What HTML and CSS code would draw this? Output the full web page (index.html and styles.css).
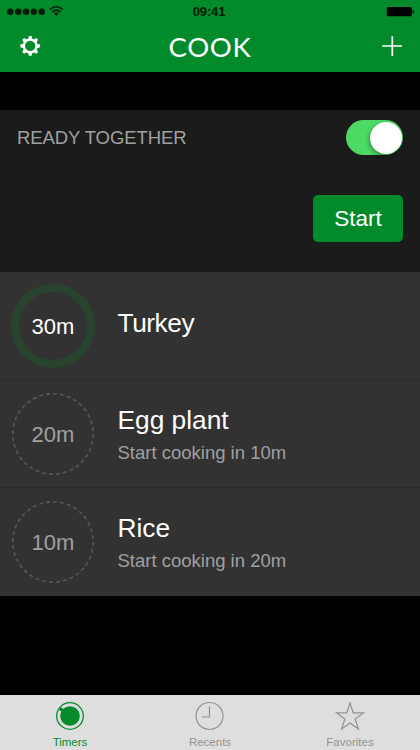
FILE: index.html
```html
<!DOCTYPE html>
<html lang="en">
<head>
<meta charset="utf-8">
<title>Cook</title>
<link rel="stylesheet" href="styles.css">
</head>
<body>
<div class="app">
  <header class="header">
    <div class="status">
      <svg class="signal" width="64" height="24" viewBox="0 0 64 24">
        <g fill="#001b08"><circle cx="10.4" cy="11.7" r="3.2"/><circle cx="18.2" cy="11.7" r="3.2"/><circle cx="26" cy="11.7" r="3.2"/><circle cx="33.8" cy="11.7" r="3.2"/><circle cx="41.7" cy="11.7" r="3.2"/><path d="M53.800 13.200Q56.300 11.700 58.800 13.200L56.300 15.900Z"/></g>
        <g fill="none" stroke="#001b08" stroke-width="1.500"><path d="M50 9.400Q56.300 4.100 62.600 9.400M52.200 11.900Q56.300 8.300 60.400 11.900"/></g>
      </svg>
      <span class="clock">09:41</span>
      <svg class="battery" width="34" height="24" viewBox="0 0 34 24"><rect x=".8" y="7" width="25" height="9.300" rx="1.500" fill="#000"/><path d="M26.400 10q1.700.4 1.700 1.700t-1.700 1.700Z" fill="#001b08"/></svg>
    </div>
    <nav class="navbar">
      <svg width="60" height="48" viewBox="0 0 60 48"><g transform="translate(30.200 21.900)"><circle r="6.300" fill="none" stroke="#fff" stroke-width="2.200"/><g fill="#fff"><path id="tooth" d="M-2.300-6.500L-1.300-9.900H1.300L2.300-6.500Z"/><use href="#tooth" transform="rotate(45)"/><use href="#tooth" transform="rotate(90)"/><use href="#tooth" transform="rotate(135)"/><use href="#tooth" transform="rotate(180)"/><use href="#tooth" transform="rotate(225)"/><use href="#tooth" transform="rotate(270)"/><use href="#tooth" transform="rotate(315)"/></g></g></svg>
      <h1 class="title">COOK</h1>
      <svg width="60" height="48" viewBox="0 0 60 48"><path d="M22.200 22H42M32.300 12.200V32" stroke="#fff" stroke-width="1.700"/></svg>
    </nav>
  </header>
  <section class="panel">
    <div class="together"><span class="together-label">READY TOGETHER</span><span class="switch"><span class="knob"></span></span></div>
    <button class="start">Start</button>
  </section>
  <main class="timers">
    <article class="timer active">
      <div class="dial"><svg width="84" height="84" viewBox="0 0 84 84"><circle cx="42" cy="42" r="38" fill="none" stroke="#28442e" stroke-width="8"/></svg><span>30m</span></div>
      <div class="info"><h2 class="turkey">Turkey</h2></div>
    </article>
    <article class="timer">
      <div class="dial"><svg width="84" height="84" viewBox="0 0 84 84"><circle cx="42" cy="42" r="40.200" pathLength="288" fill="none" stroke="#565656" stroke-width="1.700" stroke-dasharray="4.500 3.500"/></svg><span>20m</span></div>
      <div class="info"><h2>Egg plant</h2><p>Start cooking in 10m</p></div>
    </article>
    <article class="timer">
      <div class="dial"><svg width="84" height="84" viewBox="0 0 84 84"><circle cx="42" cy="42" r="40.200" pathLength="288" fill="none" stroke="#565656" stroke-width="1.700" stroke-dasharray="4.500 3.500"/></svg><span>10m</span></div>
      <div class="info"><h2>Rice</h2><p>Start cooking in 20m</p></div>
    </article>
  </main>
  <footer class="tabs">
    <div class="tab selected"><svg width="40" height="40" viewBox="0 0 40 40"><circle cx="20" cy="21" r="13.300" fill="none" stroke="#058a2c" stroke-width="1.300"/><circle cx="20" cy="21" r="9.800" fill="#058a2c"/><circle cx="11.200" cy="14.400" r="1.800" fill="#058a2c"/><path d="M11.200 14.400L14 16.500" stroke="#058a2c" stroke-width="2"/></svg><span>Timers</span></div>
    <div class="tab"><svg width="40" height="40" viewBox="0 0 40 40"><g fill="none" stroke="#929292" stroke-width="1.200"><circle cx="19.500" cy="21" r="13.500"/><path d="M19.500 11.500V22H12"/></g></svg><span>Recents</span></div>
    <div class="tab"><svg width="40" height="40" viewBox="0 0 40 40"><path d="M20 8L23.200 17.900H33.400L25.200 23.900L28.400 34L20 27.900L11.600 34L14.800 23.900L6.600 17.900H16.800Z" fill="none" stroke="#929292" stroke-width="1.200"/></svg><span>Favorites</span></div>
  </footer>
</div>
</body>
</html>
```
FILE: styles.css
```css
* { box-sizing: border-box; }
body { margin: 0; background: #000; font-family: "Liberation Sans", Arial, sans-serif; }
h1, h2, p { margin: 0; font-weight: 400; }
svg { display: block; }
.app { width: 420px; height: 750px; display: flex; flex-direction: column; overflow: hidden; }
.header { height: 72px; background: #028a2b; }
.status { height: 24px; display: grid; grid-template-columns: 1fr auto 1fr; }
.clock { font-size: 13px; line-height: 24px; font-weight: 700; letter-spacing: -.1px; margin-right: 2px; color: #001b08; }
.battery { justify-self: end; }
.navbar { height: 48px; display: flex; justify-content: space-between; }
.title { font: 400 27.500px/46px Lato, sans-serif; color: #fff; letter-spacing: .7px; }
.panel { height: 162px; margin-top: 38px; padding: 9px 17px 0; background: #1b1b1b; display: flex; flex-direction: column; }
.together { display: flex; justify-content: space-between; height: 36px; }
.together-label { font-size: 18.500px; line-height: 37px; letter-spacing: -.08px; color: #a0a0a0; }
.switch { width: 57px; height: 35px; border-radius: 18px; background: #4cd964; display: flex; justify-content: flex-end; padding: 1.500px; margin-top: 1px; }
.knob { width: 32px; height: 32px; border-radius: 50%; background: #fff; box-shadow: -1px 2px 4px rgba(0,0,0,.35); }
.start { align-self: flex-end; width: 90px; height: 47px; margin-top: 40px; padding: 0; border: 0; border-radius: 5px; background: #028a2b; color: #fff; font: 400 22.500px/48px "Liberation Sans", sans-serif; }
.timers { height: 324px; background: #323232; }
.timer { height: 108px; padding-left: 11px; display: flex; border-bottom: 1px solid #2b2b2b; }
.timer:last-child { border-bottom: 0; }
.dial { width: 84px; height: 84px; margin-top: 12px; display: grid; place-items: center; color: #a0a0a0; font-size: 22px; }
.dial > * { grid-area: 1 / 1; }
.dial span { padding-top: 1px; }
.active .dial { color: #fff; }
.info { margin-left: 22.500px; padding-top: 24px; }
.info h2 { font-size: 26.300px; line-height: 32px; color: #fff; }
.info .turkey { margin-top: 11px; letter-spacing: -.45px; }
.info p { font-size: 18.500px; line-height: 22px; margin-top: 6px; color: #a0a0a0; }
.tabs { height: 55px; margin-top: auto; background: #dedede; display: grid; grid-template-columns: repeat(3, 1fr); }
.tab { display: flex; flex-direction: column; align-items: center; font-size: 11.500px; line-height: 14px; color: #929292; }
.selected { color: #058a2c; }
```
